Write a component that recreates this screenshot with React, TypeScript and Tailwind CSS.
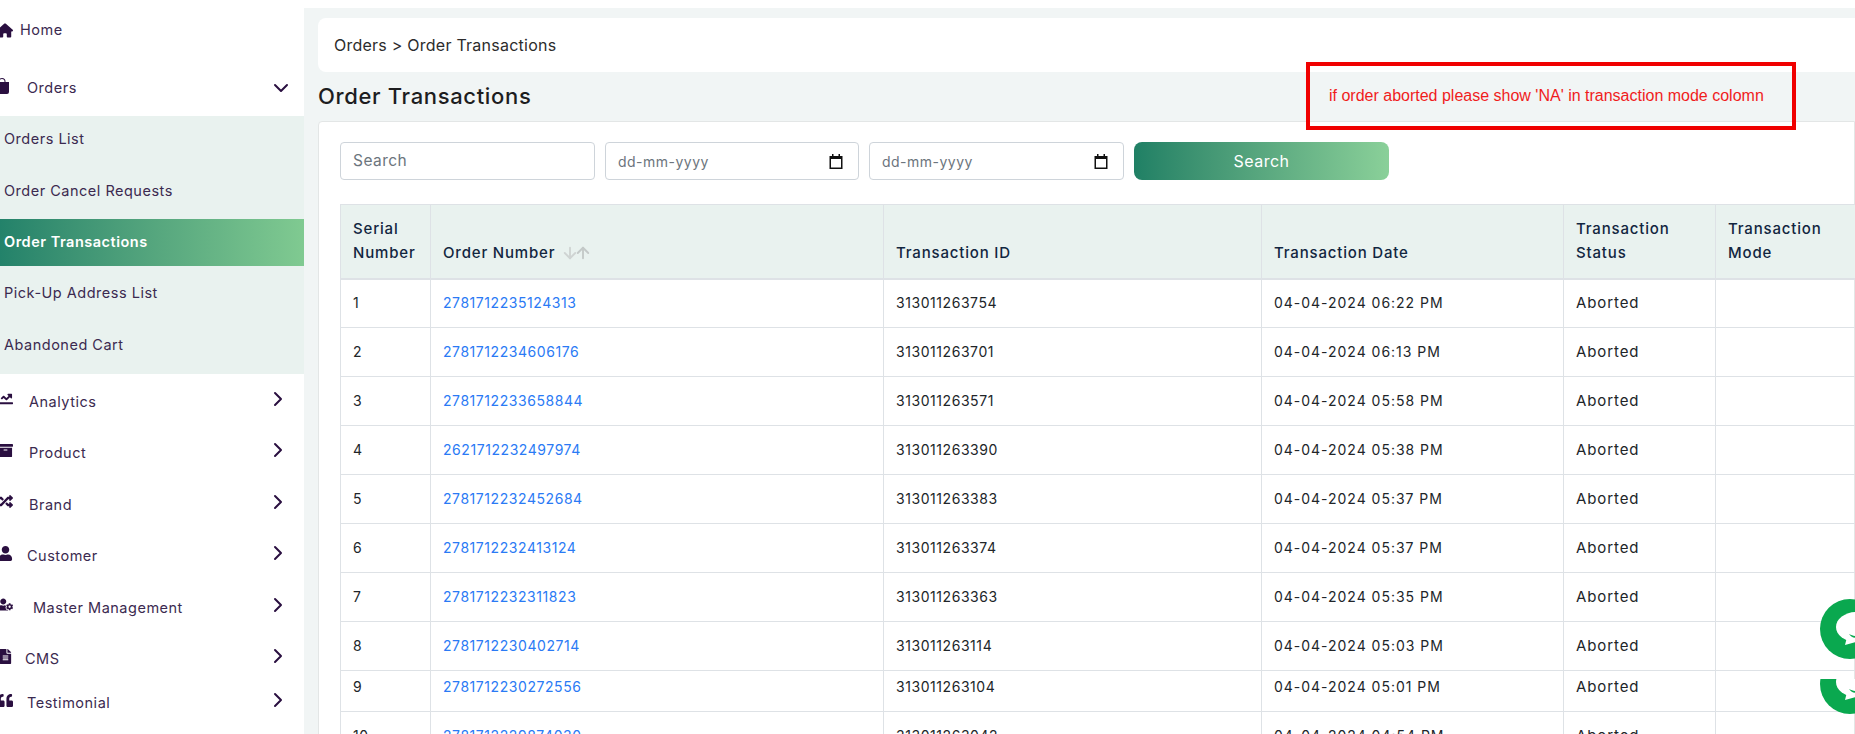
import { ArrowDown, ArrowUp, ChevronDown, ChevronRight } from "lucide-react";
import { BsBagFill } from "react-icons/bs";
import {
  FaArchive,
  FaChartLine,
  FaFileAlt,
  FaQuoteLeft,
  FaRandom,
  FaUser,
  FaUserCog,
} from "react-icons/fa";
import { FaHouse } from "react-icons/fa6";
import type { IconType } from "react-icons";

const font = "font-['Inter','Noto_Sans',sans-serif]";

const subItems = [
  { label: "Orders List", className: "h-[51px] pb-[5px]" },
  { label: "Order Cancel Requests", className: "h-[52px] pb-[4px]" },
  { label: "Order Transactions", active: true, className: "h-[47px] pb-[1px]" },
  { label: "Pick-Up Address List", className: "h-[54px]" },
  { label: "Abandoned Cart", className: "h-[54px] pb-[4px]" },
];

const navItems: { label: string; icon: IconType; textClass: string; rowClass: string }[] = [
  { label: "Analytics", icon: FaChartLine, textClass: "ml-[16px]", rowClass: "h-[51.5px]" },
  { label: "Product", icon: FaArchive, textClass: "ml-[16px]", rowClass: "h-[51.5px]" },
  { label: "Brand", icon: FaRandom, textClass: "ml-[16px]", rowClass: "h-[51.5px]" },
  { label: "Customer", icon: FaUser, textClass: "ml-[14px]", rowClass: "h-[51.5px]" },
  { label: "Master Management", icon: FaUserCog, textClass: "ml-[20px]", rowClass: "h-[51.5px]" },
  { label: "CMS", icon: FaFileAlt, textClass: "ml-[12px]", rowClass: "h-[51.5px]" },
  { label: "Testimonial", icon: FaQuoteLeft, textClass: "ml-[14px]", rowClass: "h-[36px]" },
];

const rows = [
  ["1", "2781712235124313", "313011263754", "04-04-2024 06:22 PM"],
  ["2", "2781712234606176", "313011263701", "04-04-2024 06:13 PM"],
  ["3", "2781712233658844", "313011263571", "04-04-2024 05:58 PM"],
  ["4", "2621712232497974", "313011263390", "04-04-2024 05:38 PM"],
  ["5", "2781712232452684", "313011263383", "04-04-2024 05:37 PM"],
  ["6", "2781712232413124", "313011263374", "04-04-2024 05:37 PM"],
  ["7", "2781712232311823", "313011263363", "04-04-2024 05:35 PM"],
  ["8", "2781712230402714", "313011263114", "04-04-2024 05:03 PM"],
  ["9", "2781712230272556", "313011263104", "04-04-2024 05:01 PM"],
  ["10", "2781712229874030", "313011263042", "04-04-2024 04:54 PM"],
];

const headCell =
  "border border-[#dee2e6] border-b-2 px-3 pb-[13px] text-left align-bottom leading-[24px] font-medium";

function CalendarIcon() {
  return (
    <svg width="14" height="15" viewBox="0 0 14 15" className="shrink-0">
      <path d="M3 0h1.500v2H9.500V0H11v2h2.500v13H.5V2H3z" fill="#111" />
      <rect x="2" y="5" width="10" height="8.500" fill="#fff" />
    </svg>
  );
}

function DateField({ width }: { width: string }) {
  return (
    <div className={`flex h-[38px] items-center justify-between rounded-[4px] border border-[#ced4da] bg-white pl-3 pr-[15px] ${width}`}>
      <span className="text-[14px] tracking-[0.035em] text-[#6c757d]">dd-mm-yyyy</span>
      <CalendarIcon />
    </div>
  );
}

function ChatBubble() {
  return (
    <svg width="60" height="60" viewBox="0 0 60 60" className="block">
      <circle cx="30" cy="30" r="30" fill="#0aa84f" />
      <ellipse cx="36" cy="28" rx="20" ry="15" fill="#fff" />
      <path d="M27 38l-2 8 14-4z" fill="#fff" />
      <path d="M29 35c3 1.500 5 2 8 2v2c-3 0-6-1-8-4z" fill="#0aa84f" />
    </svg>
  );
}

function Sidebar() {
  return (
    <aside className="h-[734px] w-[304px] shrink-0 overflow-hidden bg-white text-[14.5px] tracking-[0.035em] text-[#3b2a50]">
      <div className="flex h-[60px] items-center">
        <FaHouse className="-ml-[3px] h-[15px] w-[16px] text-[#2a0f40]" />
        <span className="ml-[7px]">Home</span>
      </div>
      <div className="flex h-[56px] items-center">
        <BsBagFill className="-ml-[6px] mb-[4px] h-[16px] w-[16px] text-[#2a0f40]" />
        <span className="ml-[17px]">Orders</span>
        <ChevronDown className="ml-auto mr-[11px] h-[24px] w-[24px] text-[#2a0f40]" strokeWidth={2} />
      </div>
      <div className="h-[258px] bg-[#e9f2ef]">
        {subItems.map((item) => (
          <div
            key={item.label}
            className={`flex items-center pl-1 ${item.className} ${
              item.active ? "bg-gradient-to-r from-[#23826a] to-[#80ca91] font-semibold text-white" : ""
            }`}
          >
            {item.label}
          </div>
        ))}
      </div>
      <div className="mt-[2px]">
        {navItems.map((item) => (
          <div key={item.label} className={`flex items-center ${item.rowClass}`}>
            <item.icon className="-ml-[2px] mb-[6px] h-[15px] w-[15px] shrink-0 text-[#2a0f40]" />
            <span className={item.textClass}>{item.label}</span>
            <ChevronRight className="ml-auto mb-[6px] mr-[14px] h-[24px] w-[24px] text-[#2a0f40]" strokeWidth={2} />
          </div>
        ))}
      </div>
    </aside>
  );
}

function OrdersTable() {
  return (
    <table className="w-[1600px] table-fixed border-collapse text-[14px] tracking-[0.04em]">
      <colgroup>
        <col className="w-[90px]" />
        <col className="w-[453px]" />
        <col className="w-[378px]" />
        <col className="w-[302px]" />
        <col className="w-[152px]" />
        <col className="w-[225px]" />
      </colgroup>
      <thead className="text-[15px] tracking-[0.055em]">
        <tr className="h-[74px] bg-[#e9f2ef] text-[#12263f]">
          <th className={headCell}>Serial Number</th>
          <th className={headCell}>
            <span className="flex items-center">
              Order Number
              <ArrowDown className="ml-[6px] h-[18px] w-[18px] text-[#cfd4d3]" strokeWidth={2.5} />
              <ArrowUp className="-ml-[5px] h-[18px] w-[18px] text-[#c4c9c8]" strokeWidth={2.5} />
            </span>
          </th>
          <th className={headCell}>Transaction ID</th>
          <th className={headCell}>Transaction Date</th>
          <th className={headCell}>Transaction Status</th>
          <th className={headCell}>
            <span className="block w-[110px]">Transaction Mode</span>
          </th>
        </tr>
      </thead>
      <tbody className="text-[#212529]">
        {rows.map((row) => {
          // row 9 is shorter in the picture, its text sits high
          const cell =
            row[0] === "9"
              ? "border border-[#dee2e6] px-3 pb-[8px] leading-[24px]"
              : "border border-[#dee2e6] px-3 leading-[24px]";
          return (
            <tr key={row[0]} className={row[0] === "9" ? "h-[41px]" : "h-[49px]"}>
              <td className={cell}>{row[0]}</td>
              <td className={cell}>
                <a href="#" className="text-[#2a7af5]">
                  {row[1]}
                </a>
              </td>
              <td className={cell}>{row[2]}</td>
              <td className={`${cell} tracking-[0.07em]`}>{row[3]}</td>
              <td className={`${cell} text-[15px] tracking-[0.06em]`}>Aborted</td>
              <td className={cell}></td>
            </tr>
          );
        })}
      </tbody>
    </table>
  );
}

export default function App() {
  return (
    <div className={`relative flex h-[734px] w-[1855px] overflow-hidden bg-white ${font}`}>
      <Sidebar />
      <main className="mt-2 flex-1 overflow-hidden bg-[#f1f5f5] pl-[14px]">
        <div className="mt-[10px] flex h-[54px] items-center rounded-l-lg bg-white pb-[1px] pl-[16px] text-[16px] tracking-[0.015em] text-[#2c2c2c]">
          Orders &gt; Order Transactions
        </div>
        <h1 className="flex h-[49px] items-center pb-[1px] text-[22px] leading-none font-medium tracking-[0.03em] text-[#1d1d1f]">
          Order Transactions
        </h1>
        <section className="h-[620px] rounded-tl-[4px] border border-[#e3e6e6] bg-white pl-[21px] pt-[20px]">
          <div className="flex gap-[10px]">
            <div className="flex h-[38px] w-[255px] items-center rounded-[4px] border border-[#ced4da] pl-3 text-[15.5px] tracking-[0.03em] text-[#6c757d]">
              Search
            </div>
            <DateField width="w-[254px]" />
            <DateField width="w-[255px]" />
            <button className="h-[38px] w-[255px] rounded-lg bg-gradient-to-r from-[#1f8065] to-[#8ad099] text-[16px] tracking-[0.03em] text-white">
              Search
            </button>
          </div>
          <div className="mt-6">
            <OrdersTable />
          </div>
        </section>
      </main>

      {/* note drawn over the page */}
      <div className="absolute left-[1306px] top-[62px] flex h-[68px] w-[490px] items-center border-4 border-[#f00000] pl-[19px] font-['Liberation_Sans',sans-serif] text-[16px] text-[#f01c1c]">
        if order aborted please show 'NA' in transaction mode colomn
      </div>

      {/* chat widgets, the lower one is cut off at the top */}
      <div className="absolute left-[1820px] top-[599px]">
        <ChatBubble />
      </div>
      <div className="absolute left-[1820px] top-[679px] h-[35px] overflow-hidden">
        <div className="-mt-[25px]">
          <ChatBubble />
        </div>
      </div>
    </div>
  );
}
